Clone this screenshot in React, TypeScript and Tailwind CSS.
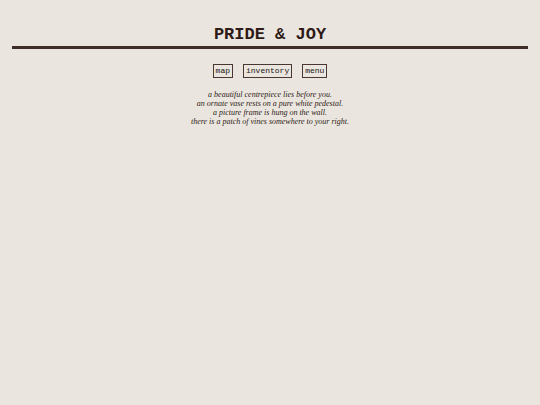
import React from 'react';

const ACTIONS = ['map', 'inventory', 'menu'];

const ROOM_TEXT = [
  'a beautiful centrepiece lies before you.',
  'an ornate vase rests on a pure white pedestal.',
  'a picture frame is hung on the wall.',
  'there is a patch of vines somewhere to your right.',
];

export default function App() {
  return (
    <div className="min-h-screen bg-[#eae6df] px-3 pt-6 text-[#2e1a16]">
      <header className="border-b-3 border-[#3d2f28] text-center">
        <h1 className="font-['Liberation_Mono',monospace] text-[17px] leading-[22px] font-bold">PRIDE &amp; JOY</h1>
      </header>

      <nav className="mt-[15px] flex justify-center gap-[10px]">
        {ACTIONS.map((action) => (
          <button
            key={action}
            type="button"
            className="border border-[#4a3731] px-[2px] font-['Liberation_Mono',monospace] text-[8px] leading-3 text-[#1c1512]"
          >
            {action}
          </button>
        ))}
      </nav>

      <main className="mt-3 text-center font-['Liberation_Serif',serif] text-[8px] leading-[9px] italic">
        {ROOM_TEXT.map((line) => (
          <p key={line}>{line}</p>
        ))}
      </main>
    </div>
  );
}
